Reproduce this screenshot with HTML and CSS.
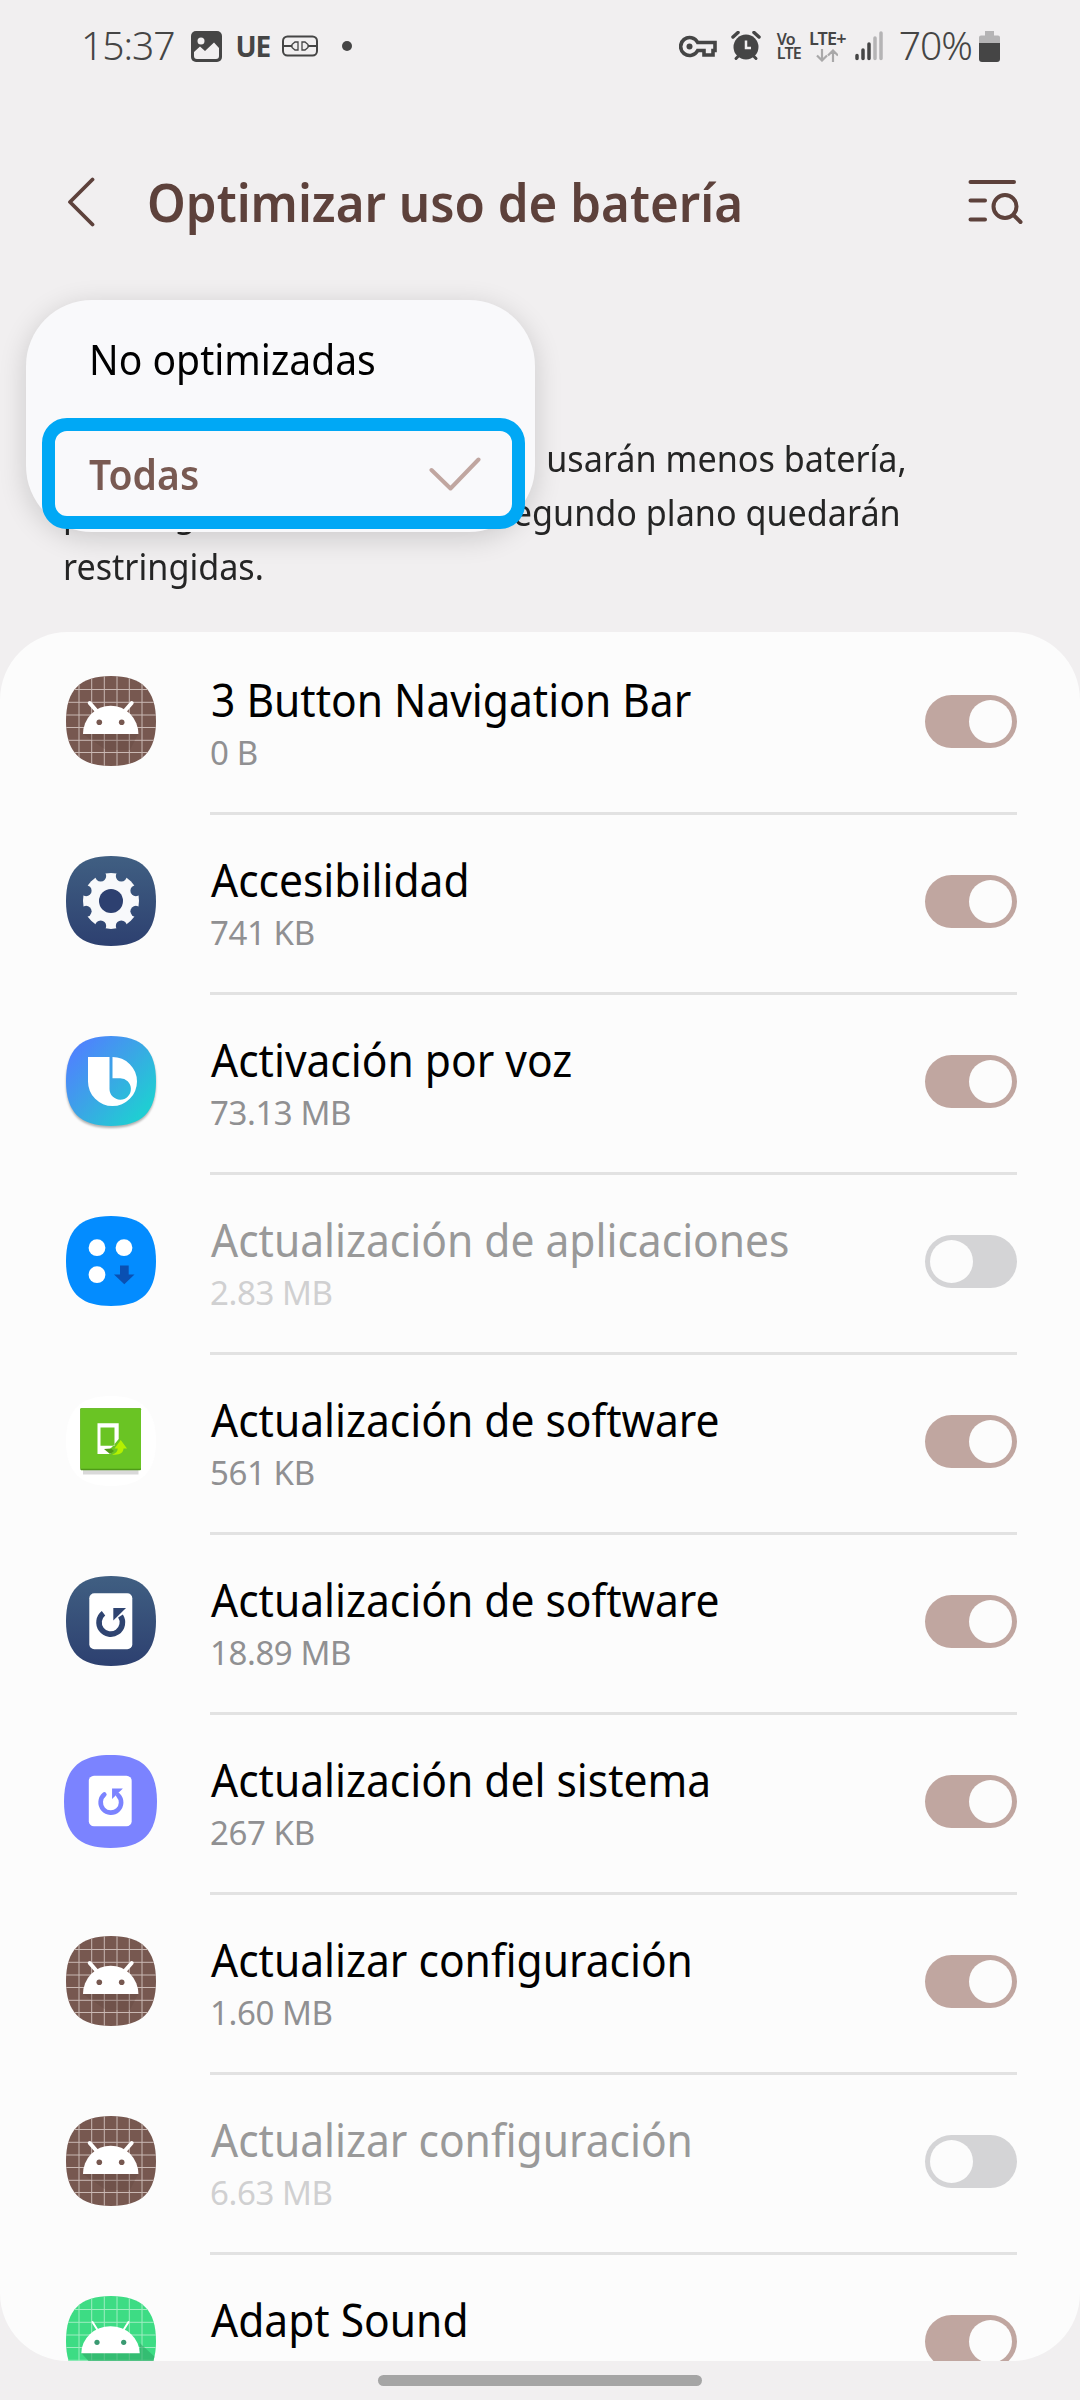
FILE: index.html
```
<!DOCTYPE html>
<html lang="es">
<head>
  <meta charset="UTF-8" />
  <meta name="viewport" content="width=device-width, initial-scale=1.0"/>
  <title>Optimizar uso de batería</title>
  <link rel="stylesheet" href="styles.css">
</head>
<body>
  <!-- Shared shapes for the app icons -->
  <svg class="defs" width="0" height="0">
    <defs>
      <linearGradient id="navy" x1="0" y1="0" x2="0" y2="1">
        <stop offset="0" stop-color="#405f82"/>
        <stop offset="1" stop-color="#2d4070"/>
      </linearGradient>
      <linearGradient id="bixby" x1="0" y1="0.2" x2="0.8" y2="0.9">
        <stop offset="0" stop-color="#5080ff"/>
        <stop offset="0.5" stop-color="#3ba5e6"/>
        <stop offset="1" stop-color="#20cdd3"/>
      </linearGradient>
      <path id="squircle" d="M45 0C14 0 0 14 0 45s14 45 45 45 45-14 45-45S76 0 45 0z"/>
      <clipPath id="squircle-clip"><use href="#squircle"/></clipPath>
      <path id="grid" d="M13 0V90M25.700 0V90M38.300 0V90M51 0V90M63.300 0V90M76 0V90M0 13.500H90M0 26.300H90M0 39H90M0 51.500H90M0 64.300H90M0 76.500H90"/>
      <symbol id="robot" viewBox="0 0 90 90">
        <g clip-path="url(#squircle-clip)">
          <rect width="90" height="90" fill="#775850"/>
          <use href="#grid" stroke="#c9b8b3" stroke-width="1"/>
          <path d="M17 58H72L64 74H40z" fill="#5d4037" opacity="0.25"/>
        </g>
        <path d="M17 58a27.700 28.300 0 0 1 55.400 0z" fill="#fff"/>
        <path d="M23.700 27l7 8M65.700 27l-7 8" stroke="#fff" stroke-width="4" stroke-linecap="round"/>
        <circle cx="33.300" cy="46.300" r="2.800" fill="#775850"/>
        <circle cx="55.700" cy="46.300" r="2.800" fill="#775850"/>
      </symbol>
    </defs>
  </svg>

  <div class="screen">
    <header class="status-bar">
      <div class="status-left">
        <span class="clock">15:37</span>
        <svg class="photo" width="31" height="31" viewBox="0 0 31 31">
          <rect width="31" height="31" rx="5" fill="#454545"/>
          <circle cx="10" cy="10" r="3.500" fill="#f1eff0"/>
          <path d="M3 21L9 15.500L14 20L23 11.500L28 17V25a3 3 0 0 1-3 3H6a3 3 0 0 1-3-3z" fill="#f1eff0"/>
        </svg>
        <span class="ue">UE</span>
        <svg class="plug" width="36" height="22" viewBox="0 0 36 22" fill="none" stroke="#454545">
          <rect x="1" y="1.500" width="34" height="19" rx="4.500" stroke-width="2"/>
          <path d="M1 11H10M26 11H35" stroke-width="2"/>
          <path d="M16 7h-3l-3 2.500v3L13 15h3zM20 7h3l3 2.500v3L23 15h-3z" stroke-width="1.300"/>
        </svg>
        <span class="dot"></span>
      </div>
      <div class="status-right">
        <svg class="key" width="38" height="23" viewBox="0 0 38 23" fill="none" stroke="#454545">
          <path d="M18.700 7.500H36V15.500H34V20H25V15.500H18.700A9 9 0 1 1 18.700 7.500z" stroke-width="3.600"/>
          <circle cx="10.500" cy="11.500" r="3" fill="#454545" stroke="none"/>
        </svg>
        <svg class="alarm" width="30" height="30" viewBox="0 0 30 30">
          <circle cx="15" cy="16" r="12.500" fill="#454545"/>
          <path d="M2 6L7 1.500M28 6L23 1.500" stroke="#454545" stroke-width="3.500" stroke-linecap="round"/>
          <path d="M5 27.500l3-3M25 27.500l-3-3" stroke="#454545" stroke-width="3" stroke-linecap="round"/>
          <path d="M15 9.500V17H20" stroke="#f1eff0" stroke-width="2.500" fill="none"/>
        </svg>
        <div class="volte"><span>Vo</span><span>LTE</span></div>
        <div class="data">
          <span>LTE+</span>
          <svg width="22" height="13" viewBox="0 0 22 13" fill="none" stroke="#a9a8a9" stroke-width="2.200">
            <path d="M6 0V11.500M1 6.500L6 11.500L11 6.500M17 13V1.500M12 6.500L17 1.500L22 6.500"/>
          </svg>
        </div>
        <svg class="signal" width="28" height="30" viewBox="0 0 28 30" stroke-width="3.500" stroke-linecap="round">
          <path d="M2 24.500V27.500M8 19V27.500M14 13V27.500" stroke="#454545"/>
          <path d="M20 7V27.500M26 2V27.500" stroke="#b5b4b5"/>
        </svg>
        <span class="percent">70%</span>
        <svg class="battery" width="21" height="31" viewBox="0 0 21 31">
          <path d="M6 0h9v4.500h4a2 2 0 0 1 2 2V14H0V6.500a2 2 0 0 1 2-2h4z" fill="#b5b4b5"/>
          <path d="M0 12h21v16a3 3 0 0 1-3 3H3a3 3 0 0 1-3-3z" fill="#454545"/>
        </svg>
      </div>
    </header>

    <div class="title-bar">
      <svg class="back" width="28" height="50" viewBox="0 0 28 50" fill="none" stroke="#5d413b" stroke-width="3.800" stroke-linecap="round" stroke-linejoin="round">
        <path d="M25.500 2.500L3 25L25.500 47.500"/>
      </svg>
      <h1>Optimizar uso de batería</h1>
      <svg class="search" width="55" height="46" viewBox="0 0 55 46" fill="none" stroke="#5d413b" stroke-width="4" stroke-linecap="round">
        <path d="M2.500 3H46M2.500 21.500H17M2.500 40.500H17"/>
        <circle cx="37" cy="27.500" r="11.500"/>
        <path d="M45.500 36L52.500 43"/>
      </svg>
    </div>

    <section class="intro">
      <p class="description"><span class="lead">Las aplicaciones optimizadas</span> usarán menos batería,<br>pero algunas funciones en segundo plano quedarán<br>restringidas.</p>
      <div class="dropdown">
        <div class="option"><span>No optimizadas</span></div>
        <div class="option selected">
          <span>Todas</span>
          <svg width="52" height="34" viewBox="0 0 52 34" fill="none" stroke="#c0a6a0" stroke-width="4" stroke-linecap="round" stroke-linejoin="round">
            <path d="M2.500 13L21.500 31.500L49.500 2.500"/>
          </svg>
        </div>
      </div>
    </section>

    <main class="app-list">
      <div class="app">
        <svg class="app-icon" viewBox="0 0 90 90"><use href="#robot"/></svg>
        <div class="app-body">
          <div class="app-text"><div class="name">3 Button Navigation Bar</div><div class="size">0 B</div></div>
          <div class="toggle on"></div>
        </div>
      </div>

      <div class="app">
        <svg class="app-icon" viewBox="0 0 90 90">
          <mask id="gear">
            <circle cx="45" cy="45" r="28" fill="#fff"/>
            <g fill="#000">
              <circle cx="45" cy="45" r="12"/>
              <circle cx="55.300" cy="20.100" r="5.500"/>
              <circle cx="69.900" cy="34.700" r="5.500"/>
              <circle cx="69.900" cy="55.300" r="5.500"/>
              <circle cx="55.300" cy="69.900" r="5.500"/>
              <circle cx="34.700" cy="69.900" r="5.500"/>
              <circle cx="20.100" cy="55.300" r="5.500"/>
              <circle cx="20.100" cy="34.700" r="5.500"/>
              <circle cx="34.700" cy="20.100" r="5.500"/>
            </g>
          </mask>
          <use href="#squircle" fill="url(#navy)"/>
          <circle cx="45" cy="45" r="13" fill="#2d4070"/>
          <rect width="90" height="90" fill="#f8f9fb" mask="url(#gear)"/>
        </svg>
        <div class="app-body">
          <div class="app-text"><div class="name">Accesibilidad</div><div class="size">741 KB</div></div>
          <div class="toggle on"></div>
        </div>
      </div>

      <div class="app">
        <svg class="app-icon bixby" viewBox="0 0 90 90">
          <use href="#squircle" fill="url(#bixby)"/>
          <path d="M22 21H43.500V53a10.700 10.700 0 1 0 10.500-10.700H46.500V21A24.500 24.500 0 1 1 22 45.500z" fill="#fff"/>
        </svg>
        <div class="app-body">
          <div class="app-text"><div class="name">Activación por voz</div><div class="size">73.13 MB</div></div>
          <div class="toggle on"></div>
        </div>
      </div>

      <div class="app disabled">
        <svg class="app-icon" viewBox="0 0 90 90">
          <use href="#squircle" fill="#038cff"/>
          <g fill="#fff">
            <circle cx="31" cy="31.700" r="8.400"/>
            <circle cx="58" cy="31.700" r="8.400"/>
            <circle cx="31" cy="58.700" r="8.400"/>
          </g>
          <path d="M54 49.500h8.700v9h5.800L58.300 68.300L48 58.500h6z" fill="#0a50b2"/>
        </svg>
        <div class="app-body">
          <div class="app-text"><div class="name">Actualización de aplicaciones</div><div class="size">2.83 MB</div></div>
          <div class="toggle"></div>
        </div>
      </div>

      <div class="app">
        <svg class="app-icon" viewBox="0 0 90 90">
          <use href="#squircle" fill="#fff"/>
          <rect x="17" y="73" width="55.500" height="5.500" fill="#d9d9d9"/>
          <rect x="14.300" y="12.300" width="60.700" height="62" rx="1" fill="#4f9a18"/>
          <rect x="14.300" y="12.300" width="60.700" height="60.500" rx="1" fill="#6ac424"/>
          <path d="M31.500 27.300H52.700V43L47 50L43 54L45 58H31.500zM34.500 31.500V49.700H48.500V31.500z" fill="#fff" fill-rule="evenodd"/>
          <path d="M38 53l7-.5 3 2.500-4 3z" fill="#4f9a18"/>
          <path d="M54.700 44L61 52.500H57.500C57.500 57 53 59.500 46 58.500C50 57.500 51.700 55.500 51.700 52.500H48.500z" fill="#b4f000"/>
        </svg>
        <div class="app-body">
          <div class="app-text"><div class="name">Actualización de software</div><div class="size">561 KB</div></div>
          <div class="toggle on"></div>
        </div>
      </div>

      <div class="app">
        <svg class="app-icon" viewBox="0 0 90 90">
          <use href="#squircle" fill="url(#navy)"/>
          <rect x="23.300" y="17.300" width="43" height="56" rx="5" fill="#fff"/>
          <path d="M37.500 37.200A11.700 11.700 0 1 0 54.500 40" fill="none" stroke="#2f4471" stroke-width="5.600"/>
          <path d="M47.300 32H60L47.300 44.500z" fill="#2f4471"/>
        </svg>
        <div class="app-body">
          <div class="app-text"><div class="name">Actualización de software</div><div class="size">18.89 MB</div></div>
          <div class="toggle on"></div>
        </div>
      </div>

      <div class="app">
        <svg class="app-icon wide" viewBox="0 0 90 90">
          <use href="#squircle" fill="#7b83ff"/>
          <rect x="24" y="20" width="41.500" height="49" rx="5" fill="#fff"/>
          <path d="M39 38.300A9.900 9.900 0 1 0 52.500 39" fill="none" stroke="#7b83ff" stroke-width="4.500" stroke-linecap="round"/>
          <path d="M46.500 32.500H57L46.500 42.500z" fill="#7b83ff"/>
        </svg>
        <div class="app-body">
          <div class="app-text"><div class="name">Actualización del sistema</div><div class="size">267 KB</div></div>
          <div class="toggle on"></div>
        </div>
      </div>

      <div class="app">
        <svg class="app-icon" viewBox="0 0 90 90"><use href="#robot"/></svg>
        <div class="app-body">
          <div class="app-text"><div class="name">Actualizar configuración</div><div class="size">1.60 MB</div></div>
          <div class="toggle on"></div>
        </div>
      </div>

      <div class="app disabled">
        <svg class="app-icon" viewBox="0 0 90 90"><use href="#robot"/></svg>
        <div class="app-body">
          <div class="app-text"><div class="name">Actualizar configuración</div><div class="size">6.63 MB</div></div>
          <div class="toggle"></div>
        </div>
      </div>

      <div class="app">
        <svg class="app-icon" viewBox="0 0 90 90">
          <g clip-path="url(#squircle-clip)">
            <rect width="90" height="90" fill="#3ddc84"/>
            <use href="#grid" stroke="#9eedc1" stroke-width="1"/>
            <path d="M15.300 57L73.700 57V47L90 62V90H45z" fill="#2fa866" opacity="0.6"/>
          </g>
          <path d="M15.300 57.300a29.200 27 0 0 1 58.400 0z" fill="#fff"/>
          <path d="M26.500 26l5 8M62.500 26l-5 8" stroke="#fff" stroke-width="2" stroke-linecap="round"/>
          <circle cx="31" cy="46.300" r="2.600" fill="#3a9a72"/>
          <circle cx="57.700" cy="46.300" r="2.600" fill="#3a9a72"/>
        </svg>
        <div class="app-body">
          <div class="app-text"><div class="name">Adapt Sound</div><div class="size">24.00 MB</div></div>
          <div class="toggle on"></div>
        </div>
      </div>
    </main>

    <footer class="nav-bar"><div class="handle"></div></footer>
  </div>
</body>
</html>
```
FILE: styles.css
```
* {
  box-sizing: border-box;
}

body {
  margin: 0;
  background: #f1eff0;
  font-family: 'Noto Sans', 'Open Sans', sans-serif;
  color: #000;
}

svg {
  display: block;
  flex: none;
}

.defs {
  position: absolute;
}

.screen {
  width: 1080px;
  height: 2400px;
  display: flex;
  flex-direction: column;
  overflow: hidden;
}

/* Status bar */
.status-bar {
  height: 92px;
  padding: 0 80px 0 81px;
  display: flex;
  justify-content: space-between;
  align-items: center;
  color: #454545;
}

.status-left, .status-right {
  display: flex;
  align-items: center;
}

.clock, .percent {
  font-size: 39px;
  font-weight: 300;
  line-height: 60px;
  letter-spacing: -1px;
  margin-top: -3px;
}

.photo {
  margin-left: 16px;
}

.ue {
  margin-left: 14px;
  font-size: 28px;
  font-weight: 700;
  line-height: 30px;
  letter-spacing: -1.3px;
}

.plug {
  margin-left: 12px;
}

.dot {
  width: 10px;
  height: 10px;
  margin-left: 24px;
  border-radius: 50%;
  background: #454545;
}

.alarm {
  margin-left: 14px;
}

.volte, .data {
  display: flex;
  flex-direction: column;
  font-weight: 600;
}

.volte {
  margin-left: 16px;
  font-size: 16px;
  line-height: 14px;
  letter-spacing: -0.8px;
}

.data {
  align-items: center;
  margin-left: 8px;
  font-size: 18px;
  line-height: 14px;
  letter-spacing: -0.8px;
  gap: 4px;
}

.signal {
  margin-left: 9px;
}

.percent {
  margin-left: 16px;
}

.battery {
  margin-left: 7px;
}

/* Title */
.title-bar {
  height: 220px;
  padding: 0 57px 0 67px;
  display: flex;
  align-items: center;
  color: #5d413b;
}

h1 {
  flex: 1;
  margin: 0 0 0 52px;
  font-size: 53px;
  font-weight: 600;
  line-height: 72px;
}

/* The type is slightly narrower than regular Noto Sans */
h1, .name, .description, .option span {
  transform: scaleX(0.93);
  transform-origin: left;
}

/* Intro text with the open dropdown over it */
.intro {
  position: relative;
  height: 320px;
  padding: 119px 63px 0;
}

.description {
  margin: 0;
  font-size: 37px;
  line-height: 54px;
  color: #252525;
  white-space: nowrap;
  transform: scaleX(0.923);
}

.lead {
  padding-right: 13px;
}

.dropdown {
  position: absolute;
  left: 26px;
  top: -12px;
  width: 509px;
  height: 232px;
  border-radius: 66px;
  background: #f9f9fb;
  box-shadow: 0 6px 28px rgba(0, 0, 0, 0.16);
  display: flex;
  flex-direction: column;
  padding: 0 10px 3px 16px;
}

.option {
  height: 118px;
  padding: 0 0 0 47px;
  font-size: 42px;
  line-height: 117px;
}

.option span {
  display: inline-block;
}

.option.selected {
  height: 111px;
  display: flex;
  justify-content: space-between;
  align-items: center;
  padding: 0 31px 0 34px;
  border: 13px solid #00a8f5;
  border-radius: 25px;
  line-height: 85px;
  font-weight: 600;
  color: #795a52;
}

/* App list */
.app-list {
  height: 1729px;
  padding-top: 3px;
  border-radius: 68px;
  background: #fcfcfc;
  overflow: hidden;
}

.app {
  height: 180px;
  display: flex;
  padding: 0 63px 0 66px;
}

.app-icon {
  width: 90px;
  height: 90px;
  margin-top: 41px;
}

.app-icon.wide {
  width: 93px;
  height: 93px;
  margin: 40px -1px 0 -2px;
}

.app-icon.bixby {
  filter: drop-shadow(0 2px 1px rgba(0, 0, 0, 0.3));
}

.app-body {
  flex: 1;
  display: flex;
  justify-content: space-between;
  margin-left: 54px;
  border-bottom: 3px solid #e2e2e2;
}

.app-text {
  padding-top: 37px;
  white-space: nowrap;
}

.name {
  font-size: 45px;
  line-height: 56px;
  transform: translateX(1px) scaleX(0.945);
}

.size {
  margin-top: 3px;
  font-size: 33px;
  line-height: 44px;
  letter-spacing: -0.4px;
  color: #909092;
}

.disabled .name {
  color: #999;
}

.disabled .size {
  color: #d0d0d1;
}

.toggle {
  width: 92px;
  height: 53px;
  margin-top: 60px;
  padding: 5px;
  border-radius: 27px;
  background: #d4d4d6;
  display: flex;
}

.toggle::before {
  content: '';
  width: 43px;
  height: 43px;
  border-radius: 50%;
  background: #fcfcfc;
}

.toggle.on {
  justify-content: flex-end;
  background: #c0a6a0;
}

/* Gesture handle */
.nav-bar {
  flex: 1;
  display: flex;
  justify-content: center;
  padding-top: 14px;
}

.handle {
  width: 324px;
  height: 11px;
  border-radius: 6px;
  background: #a5a5a5;
}
```
